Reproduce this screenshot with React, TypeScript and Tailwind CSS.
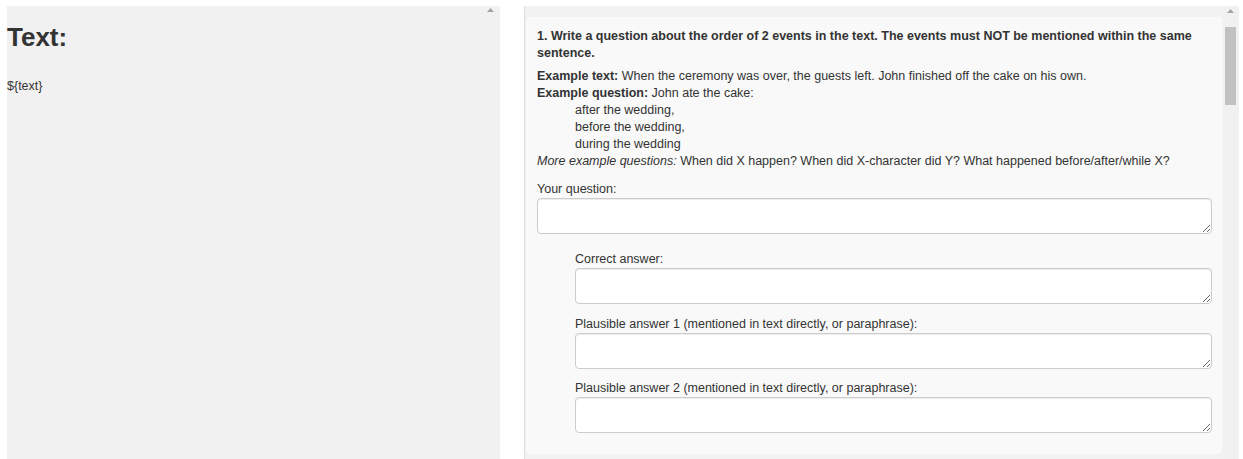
import React from "react";

function Arrow({ className }: { className?: string }) {
  return (
    <svg width="7" height="4" viewBox="0 0 7 4" className={className}>
      <polygon points="0,4 3.5,0 7,4" fill="#a3a3a3" />
    </svg>
  );
}

function Field({ label }: { label: string }) {
  return (
    <div>
      <div className="leading-[17px]">{label}</div>
      <textarea className="block w-full h-[36px] bg-white border border-[#ccc] rounded-[4px] shadow-[inset_0_1px_1px_rgba(0,0,0,0.075)]" />
    </div>
  );
}

export default function App() {
  return (
    <div
      className="flex h-[459px] w-[1243px] bg-white pt-[6px] pl-[7px] text-[#333] overflow-hidden"
      style={{ fontFamily: '"Liberation Sans", Arial, sans-serif' }}
    >
      <div className="relative w-[493px] h-[453px] bg-[#f1f1f1]">
        <Arrow className="absolute right-[6px] top-[2px]" />
        <h2 className="text-[26px] font-bold leading-[29px] mt-[17px] text-[#333]">Text:</h2>
        <div className="text-[12.5px] leading-[17px] mt-[26px]">${"{text}"}</div>
      </div>
      <div className="ml-[24px] w-[715px] h-[453px] border-l border-[#dcdcdc] bg-[#f2f2f2] flex pl-[1px]">
        <div className="w-[696px] h-[437px] mt-[11px] bg-[#f9f9f9] rounded-[4px] pl-[11px] pr-[10px] pt-[11px] text-[12.5px] leading-[17px]">
          <div className="font-bold">
            1. Write a question about the order of 2 events in the text. The events must NOT be mentioned within the same sentence.
          </div>
          <div className="mt-[6px]">
            <div>
              <b>Example text:</b> When the ceremony was over, the guests left. John finished off the cake on his own.
            </div>
            <div>
              <b>Example question:</b> John ate the cake:
            </div>
            <div className="pl-[38px]">
              <div>after the wedding,</div>
              <div>before the wedding,</div>
              <div>during the wedding</div>
            </div>
            <div>
              <i>More example questions:</i> When did X happen? When did X-character did Y? What happened before/after/while X?
            </div>
          </div>
          <div className="mt-[11px]">
            <Field label="Your question:" />
          </div>
          <div className="pl-[38px] mt-[17px] flex flex-col gap-[11.5px]">
            <Field label="Correct answer:" />
            <Field label="Plausible answer 1 (mentioned in text directly, or paraphrase):" />
            <Field label="Plausible answer 2 (mentioned in text directly, or paraphrase):" />
          </div>
        </div>
        <div className="ml-[1px] w-[15px] h-[453px] bg-[#f1f1f1] relative">
          <Arrow className="absolute left-[4px] top-[3px]" />
          <div className="absolute left-[2px] top-[21px] w-[11px] h-[78px] bg-[#c1c1c1]" />
        </div>
      </div>
    </div>
  );
}
